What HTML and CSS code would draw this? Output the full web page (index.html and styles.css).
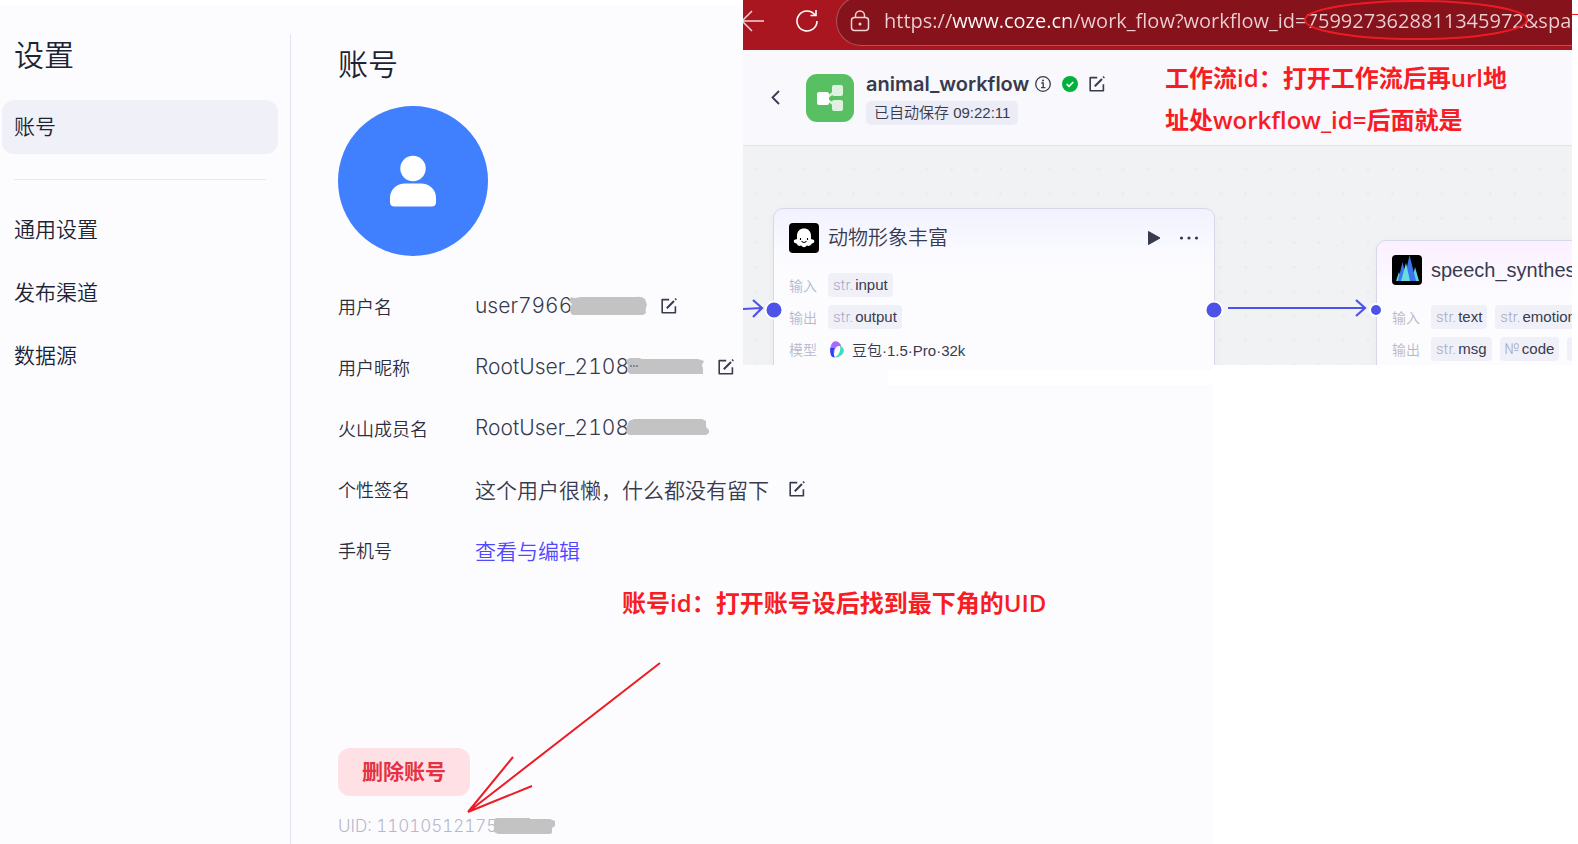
FILE: index.html
```html
<!DOCTYPE html>
<html lang="zh-CN">
<head>
  <meta charset="UTF-8">
  <title>账号设置</title>
  <link rel="stylesheet" href="styles.css">
</head>
<body>
  <!-- shared icons -->
  <svg class="sprite" aria-hidden="true">
    <symbol id="icon-edit" viewBox="0 0 16 16">
      <path d="M8.2 1.6H1.2V14.8H14.4V8.2" fill="none" stroke="currentColor" stroke-width="1.6" stroke-linejoin="round"/>
      <path d="M5.8 10.2L13 3M14.2 1.8L15.2 .8" fill="none" stroke="currentColor" stroke-width="2"/>
    </symbol>
  </svg>

  <div class="settings">
    <nav class="sidebar">
      <h1>设置</h1>
      <a href="#" class="nav-item active">账号</a>
      <hr>
      <a href="#" class="nav-item">通用设置</a>
      <a href="#" class="nav-item">发布渠道</a>
      <a href="#" class="nav-item">数据源</a>
    </nav>

    <main class="account">
      <h2>账号</h2>
      <svg class="avatar" viewBox="0 0 150 150">
        <circle cx="75" cy="75" r="75" fill="#4080ff"/>
        <circle cx="75" cy="62.500" r="12.700" fill="#fff"/>
        <path d="M52 92C52 83 59 77.500 67 77.500H83C91 77.500 98 83 98 92V96Q98 100.500 93.500 100.500H56.500Q52 100.500 52 96Z" fill="#fff"/>
      </svg>

      <dl class="info">
        <div class="info-row">
          <dt>用户名</dt>
          <dd>user7966
            <svg class="mask" width="78" height="20" viewBox="0 0 78 20"><path d="M2 1Q5 3 11 1H68Q72 0 76 3L78 9Q76 12 77 17L74 19H4Q1 18 1 12L3 8L0 5Z"/></svg>
            <button class="edit" aria-label="编辑用户名"><svg><use href="#icon-edit"/></svg></button>
          </dd>
        </div>
        <div class="info-row">
          <dt>用户昵称</dt>
          <dd>RootUser_2108
            <svg class="mask" width="78" height="17" viewBox="0 0 78 17"><path d="M0 2L4 0H13L16 1H72L78 3L76 7L77 11V16H4L1 13L2 8Z"/><path d="M4 8H6M7 8H9M10 8H12" stroke="#4a4d60"/></svg>
            <button class="edit" aria-label="编辑用户昵称"><svg><use href="#icon-edit"/></svg></button>
          </dd>
        </div>
        <div class="info-row">
          <dt>火山成员名</dt>
          <dd>RootUser_2108
            <svg class="mask" width="83" height="17" viewBox="0 0 83 17"><path d="M3 2L8 0H76L80 2V8L83 11V14L80 16H3L0 13L1 7Z"/></svg>
          </dd>
        </div>
        <div class="info-row">
          <dt>个性签名</dt>
          <dd>这个用户很懒，什么都没有留下
            <button class="edit wide" aria-label="编辑个性签名"><svg><use href="#icon-edit"/></svg></button>
          </dd>
        </div>
        <div class="info-row">
          <dt>手机号</dt>
          <dd><a href="#">查看与编辑</a></dd>
        </div>
      </dl>

      <div class="account-footer">
        <button class="delete">删除账号</button>
        <p class="uid">UID: 11010512175<svg class="mask" width="61" height="17" viewBox="0 0 61 17"><path d="M0 1L3 0H36V1H56L61 3V8L58 10V15L56 16H4L0 14Z"/></svg></p>
      </div>
    </main>
  </div>
  <div class="blank"></div>

  <!-- workflow window -->
  <section class="workflow">
    <div class="browser-bar">
      <button aria-label="后退"><svg width="26" height="24" viewBox="0 0 26 24"><path d="M21 12H-2M9 2L-1 12L9 22" fill="none" stroke="#f2d5d7" stroke-width="1.500"/></svg></button>
      <button aria-label="刷新"><svg width="24" height="24" viewBox="0 0 24 24"><path d="M20 6A10 10 0 1 0 22 12M21 1V6.500H15.500" fill="none" stroke="#fff" stroke-width="1.600"/></svg></button>
      <div class="address">
        <svg width="20" height="22" viewBox="0 0 20 22"><rect x="1.500" y="7.500" width="17" height="13" rx="3" fill="none" stroke="#f2d5d7" stroke-width="1.500"/><path d="M5.500 7.500V5.500A4.500 4.500 0 0 1 14.500 5.500V7.500" fill="none" stroke="#f2d5d7" stroke-width="1.500"/><circle cx="10" cy="14" r="1.500" fill="#f2d5d7"/></svg>
        <input type="text" aria-label="网址" value="https://www.coze.cn/work_flow?workflow_id=7599273628811345972&amp;space_id">
      </div>
    </div>

    <header class="workflow-header">
      <button aria-label="返回"><svg width="9" height="15" viewBox="0 0 9 15"><path d="M8 1L1.500 7.500L8 14" fill="none" stroke="#383b4e" stroke-width="1.800"/></svg></button>
      <svg class="logo" width="48" height="48" viewBox="0 0 48 48">
        <rect width="48" height="48" rx="11" fill="#58c062"/>
        <path d="M20 24L30 17M20 25L30 32" stroke="#dff2e0" stroke-width="2.500"/>
        <rect x="26" y="11" width="11" height="11" rx="2" fill="#dff2e0"/>
        <rect x="26" y="26" width="11" height="11" rx="2" fill="#dff2e0"/>
        <rect x="11" y="18" width="12" height="13" rx="2" fill="#fff"/>
      </svg>
      <div>
        <div class="name">
          <h3>animal_workflow</h3>
          <svg width="16" height="16" viewBox="0 0 16 16"><circle cx="8" cy="8" r="7.300" fill="none" stroke="#383b4e" stroke-width="1.300"/><circle cx="8" cy="4.500" r="1" fill="#383b4e"/><path d="M6.300 7H8.200V11.500M6 11.700H10.300" fill="none" stroke="#383b4e" stroke-width="1.300"/></svg>
          <svg width="16" height="16" viewBox="0 0 16 16"><circle cx="8" cy="8" r="8" fill="#00b23c"/><path d="M4.700 8.200L7 10.400L11.300 6" fill="none" stroke="#fff" stroke-width="1.700"/></svg>
          <button class="edit" aria-label="编辑工作流"><svg><use href="#icon-edit"/></svg></button>
        </div>
        <span class="saved">已自动保存 09:22:11</span>
      </div>
    </header>

    <div class="canvas">
      <svg class="dots">
        <defs><pattern id="grid" x="0" y="10" width="24.500" height="24.500" patternUnits="userSpaceOnUse"><circle cx="12.500" cy="13" r="1.600" fill="#eaecef"/></pattern></defs>
        <rect width="100%" height="100%" fill="url(#grid)"/>
      </svg>

      <article class="node node-llm">
        <div class="node-title">
          <svg width="30" height="30" viewBox="0 0 30 30"><rect width="30" height="30" rx="4" fill="#000"/><path d="M8 13C8 8 11 5.500 15 5.500S22 8 22 13V16L25 17Q26 20 23 20.500Q21 24 18 22.500Q15 26 12 22.500Q9 24 7.500 20.500Q4 20 5 17L8 16Z" fill="#fff"/><path d="M11.500 15V17M18.500 15V17M12.500 18Q15 21 17.500 18" fill="none" stroke="#000" stroke-width="1.100"/></svg>
          <h4>动物形象丰富</h4>
          <button aria-label="运行"><svg width="14" height="16" viewBox="0 0 14 16"><path d="M1.500 1.500L13 8L1.500 14.500Z" fill="#383b4e" stroke="#383b4e" stroke-linejoin="round"/></svg></button>
          <button aria-label="更多"><svg width="20" height="6" viewBox="0 0 20 6"><g fill="#383b4e"><circle cx="2.500" cy="3" r="1.600"/><circle cx="10" cy="3" r="1.600"/><circle cx="17.500" cy="3" r="1.600"/></g></svg></button>
        </div>
        <div class="node-row"><span class="key">输入</span><span class="chip"><i>str.</i>input</span></div>
        <div class="node-row"><span class="key">输出</span><span class="chip"><i>str.</i>output</span></div>
        <div class="node-row"><span class="key">模型</span>
          <svg class="model" width="18" height="18" viewBox="0 0 18 18"><path d="M4 17C1 13 2 3 6 1.500C10 0 13 4 13.500 7C9 4 6 8 6 16Z" fill="#a66bff"/><path d="M2.300 8C2 14 3.500 18 7 17.500C5 14 5 11 6.500 8Z" fill="#2440ff"/><path d="M12 6C18 8 17 15 9 17.500L7 17C11 15 13 11 12 6Z" fill="#3fdcc0"/></svg>
          豆包·1.5·Pro·32k</div>
      </article>

      <article class="node node-speech">
        <div class="node-title">
          <svg width="30" height="30" viewBox="0 0 30 30"><rect width="30" height="30" rx="4" fill="#000"/><path d="M4 26L7 17L10 26Z M20 26L23 12L27 26Z" fill="#5cd5dd"/><path d="M6 26L10.500 7L15 26Z M12 26L17.500 0L24 26Z" fill="#3a74ee"/><path d="M9 26L14 8L18 26Z" fill="#68dcdf"/></svg>
          <h4>speech_synthesis</h4>
        </div>
        <div class="node-row"><span class="key">输入</span><span class="chip"><i>str.</i>text</span><span class="chip"><i>str.</i>emotion</span></div>
        <div class="node-row"><span class="key">输出</span><span class="chip"><i>str.</i>msg</span><span class="chip"><i>№</i>code</span><span class="chip empty"></span></div>
      </article>

      <svg class="edges">
        <g fill="none" stroke="#4d53e8" stroke-width="2.200">
          <path d="M0 163L19 162M10 154L19 162L10 171"/>
          <path d="M485 162H621M613 154L622 162L613 170"/>
        </g>
        <g fill="#4d53e8" stroke="#fff" stroke-width="2">
          <circle cx="31" cy="164" r="8.500"/>
          <circle cx="471" cy="164" r="8.500"/>
          <circle cx="633" cy="164" r="6"/>
        </g>
      </svg>
    </div>
  </section>

  <!-- notes drawn over the windows -->
  <p class="note note-workflow">工作流id：打开工作流后再url地<br>址处workflow_id=后面就是</p>
  <p class="note note-account">账号id：打开账号设后找到最下角的UID</p>
  <svg class="marks">
    <g fill="none" stroke="#ed1c24" stroke-width="2">
      <ellipse cx="1416" cy="20" rx="111" ry="19"/>
      <path d="M1572 14.500H1578" stroke-width="1"/>
      <path d="M660 663L468 812L513 757M468 812L532 786"/>
    </g>
  </svg>
</body>
</html>
```
FILE: styles.css
```css
* {
  box-sizing: border-box;
}

body {
  display: flex;
  flex-direction: column;
  min-height: 100vh;
  margin: 0;
  padding-top: 5px;
  position: relative;
  overflow-x: hidden;
  background: #fff;
  color: #1d2333;
  font-family: Inter, "Noto Sans CJK SC", sans-serif;
  font-weight: 350;
}

h1, h2, h3, h4, p, dl, dd {
  margin: 0;
  font-weight: 350;
}

button {
  display: flex;
  padding: 0;
  border: none;
  background: none;
  font-family: inherit;
  cursor: pointer;
}

a {
  text-decoration: none;
}

svg {
  flex-shrink: 0;
}

.sprite {
  position: absolute;
  width: 0;
  height: 0;
}

/* Settings */
.settings {
  display: flex;
  flex: 1;
  margin-right: 365px;
  background: #fcfcff;
}

.sidebar {
  display: flex;
  flex-direction: column;
  gap: 9px;
  width: 290px;
  padding: 28px 12px 0 2px;
}

h1, h2 {
  font-size: 30px;
  line-height: 44px;
}

h1 {
  margin-bottom: 14px;
  padding-left: 12px;
}

.nav-item {
  padding: 0 12px;
  border-radius: 12px;
  color: #1d2333;
  font-size: 21px;
  line-height: 54px;
}

.nav-item.active {
  background: #f0f0f9;
}

.sidebar hr {
  width: 252px;
  margin: 16px 12px 14px;
  border: none;
  border-top: 1px solid #e8e9ee;
}

.account {
  display: flex;
  flex: 1;
  flex-direction: column;
  margin-top: 29px;
  padding: 8px 0 4px 47px;
  border-left: 1px solid #e3e4f0;
}

.avatar {
  width: 150px;
  height: 150px;
  margin: 20px 0 19px;
}

.info-row {
  display: flex;
  align-items: center;
  height: 61px;
}

.info dt {
  width: 137px;
  color: #2b2e3f;
  font-size: 18px;
}

.info dd {
  display: flex;
  align-items: center;
  color: #383b4e;
  font-size: 21px;
  font-variant-numeric: tabular-nums;
}

.info a {
  color: #5147ff;
}

.mask {
  margin-left: -3px;
  fill: #c3c3c3;
}

.edit {
  color: #383b4e;
}

.edit svg {
  width: 16px;
  height: 16px;
}

.info .edit {
  margin-left: 14px;
}

.info .wide {
  margin-left: 20px;
}

.account-footer {
  margin-top: auto;
}

.delete {
  padding: 0 24px;
  border-radius: 12px;
  background: #ffe0e4;
  color: #e53241;
  font-size: 21px;
  font-weight: 700;
  line-height: 48px;
}

.uid {
  display: flex;
  align-items: center;
  margin-top: 16px;
  color: #b5b8cc;
  font-size: 17px;
  font-variant-numeric: tabular-nums;
  line-height: 28px;
}

.blank {
  position: absolute;
  top: 370px;
  right: 365px;
  left: 888px;
  height: 15px;
  background: #fff;
}

/* Workflow window, lies over the settings page */
.workflow {
  position: absolute;
  top: 0;
  right: 6px;
  left: 743px;
  overflow: hidden;
  font-family: "Liberation Sans", "Noto Sans CJK SC", sans-serif;
}

.browser-bar {
  display: flex;
  align-items: center;
  gap: 26px;
  height: 50px;
  padding-bottom: 9px;
  background: #a91620;
}

.address {
  display: flex;
  flex: 1;
  align-items: center;
  gap: 14px;
  height: 50px;
  margin-left: -9px;
  padding-left: 13px;
  border: 1px solid #ac555c;
  border-right: none;
  border-radius: 25px 0 0 25px;
  background: #86121b;
}

.address input {
  flex: 1;
  min-width: 0;
  padding: 0;
  border: none;
  outline: none;
  /* host name brighter than the rest */
  background: linear-gradient(90deg, #ecd0d3 67px, #fff 67px, #fff 186px, #ecd0d3 186px);
  background-clip: text;
  color: transparent;
  font-family: "Open Sans", sans-serif;
  font-size: 20px;
  line-height: 30px;
}

.workflow-header {
  display: flex;
  align-items: center;
  height: 96px;
  padding-left: 28px;
  border-bottom: 1px solid #e1e3ee;
  background: #f8f8fd;
}

.logo {
  margin: 0 12px 0 26px;
}

.name {
  display: flex;
  align-items: center;
  gap: 11px;
  height: 28px;
}

.name h3 {
  margin-right: -5px;
  color: #383b4e;
  font-family: Inter, sans-serif;
  font-size: 20px;
  font-weight: 600;
}

.saved {
  display: block;
  width: max-content;
  margin-top: 3px;
  padding: 0 8px;
  border-radius: 5px;
  background: #ececf6;
  color: #383b4e;
  font-size: 15px;
  line-height: 24px;
}

.canvas {
  position: relative;
  height: 219px;
  overflow: hidden;
  background: #f1f2f4;
}

.dots, .edges {
  position: absolute;
  top: 0;
  left: 0;
  width: 100%;
  height: 100%;
}

.node {
  position: absolute;
  height: 240px;
  padding: 14px 15px;
  border: 1px solid #d6d8e8;
  border-radius: 10px;
  box-shadow: 0 2px 8px rgba(0, 0, 0, .04);
  color: #383b4e;
  font-size: 15px;
}

.node-llm {
  top: 62px;
  left: 30px;
  width: 442px;
  background: linear-gradient(#f2f2ff, #fcfcff 55px);
}

.node-speech {
  top: 94px;
  left: 633px;
  width: 442px;
  background: linear-gradient(#fbf0ff, #fcfcff 55px);
}

.node-title {
  display: flex;
  align-items: center;
  gap: 18px;
  height: 30px;
  margin-bottom: 16px;
}

.node-title h4 {
  flex: 1;
  margin-left: -9px;
  font-size: 20px;
  line-height: 30px;
}

.node-row {
  display: flex;
  align-items: center;
  gap: 8px;
  height: 32px;
}

.key {
  width: 31px;
  color: #b5b8cc;
  font-size: 14px;
}

.chip {
  padding: 0 5px;
  border-radius: 4px;
  background: #f0f0f9;
  line-height: 24px;
}

.chip i {
  margin-right: 2px;
  color: #a5a8c0;
  font-family: Roboto, sans-serif;
  font-style: normal;
}

.chip.empty {
  width: 60px;
  height: 24px;
}

.model {
  margin-right: -2px;
}

/* Notes */
.note {
  position: absolute;
  color: #f81c24;
  font-family: "Open Sans", "Noto Sans CJK SC", sans-serif;
  font-size: 24px;
  font-weight: 600;
  line-height: 42px;
}

.note-workflow {
  top: 57px;
  left: 1165px;
}

.note-account {
  top: 582px;
  left: 622px;
}

.marks {
  position: absolute;
  top: 0;
  left: 0;
  width: 100%;
  height: 100%;
  pointer-events: none;
}
```
